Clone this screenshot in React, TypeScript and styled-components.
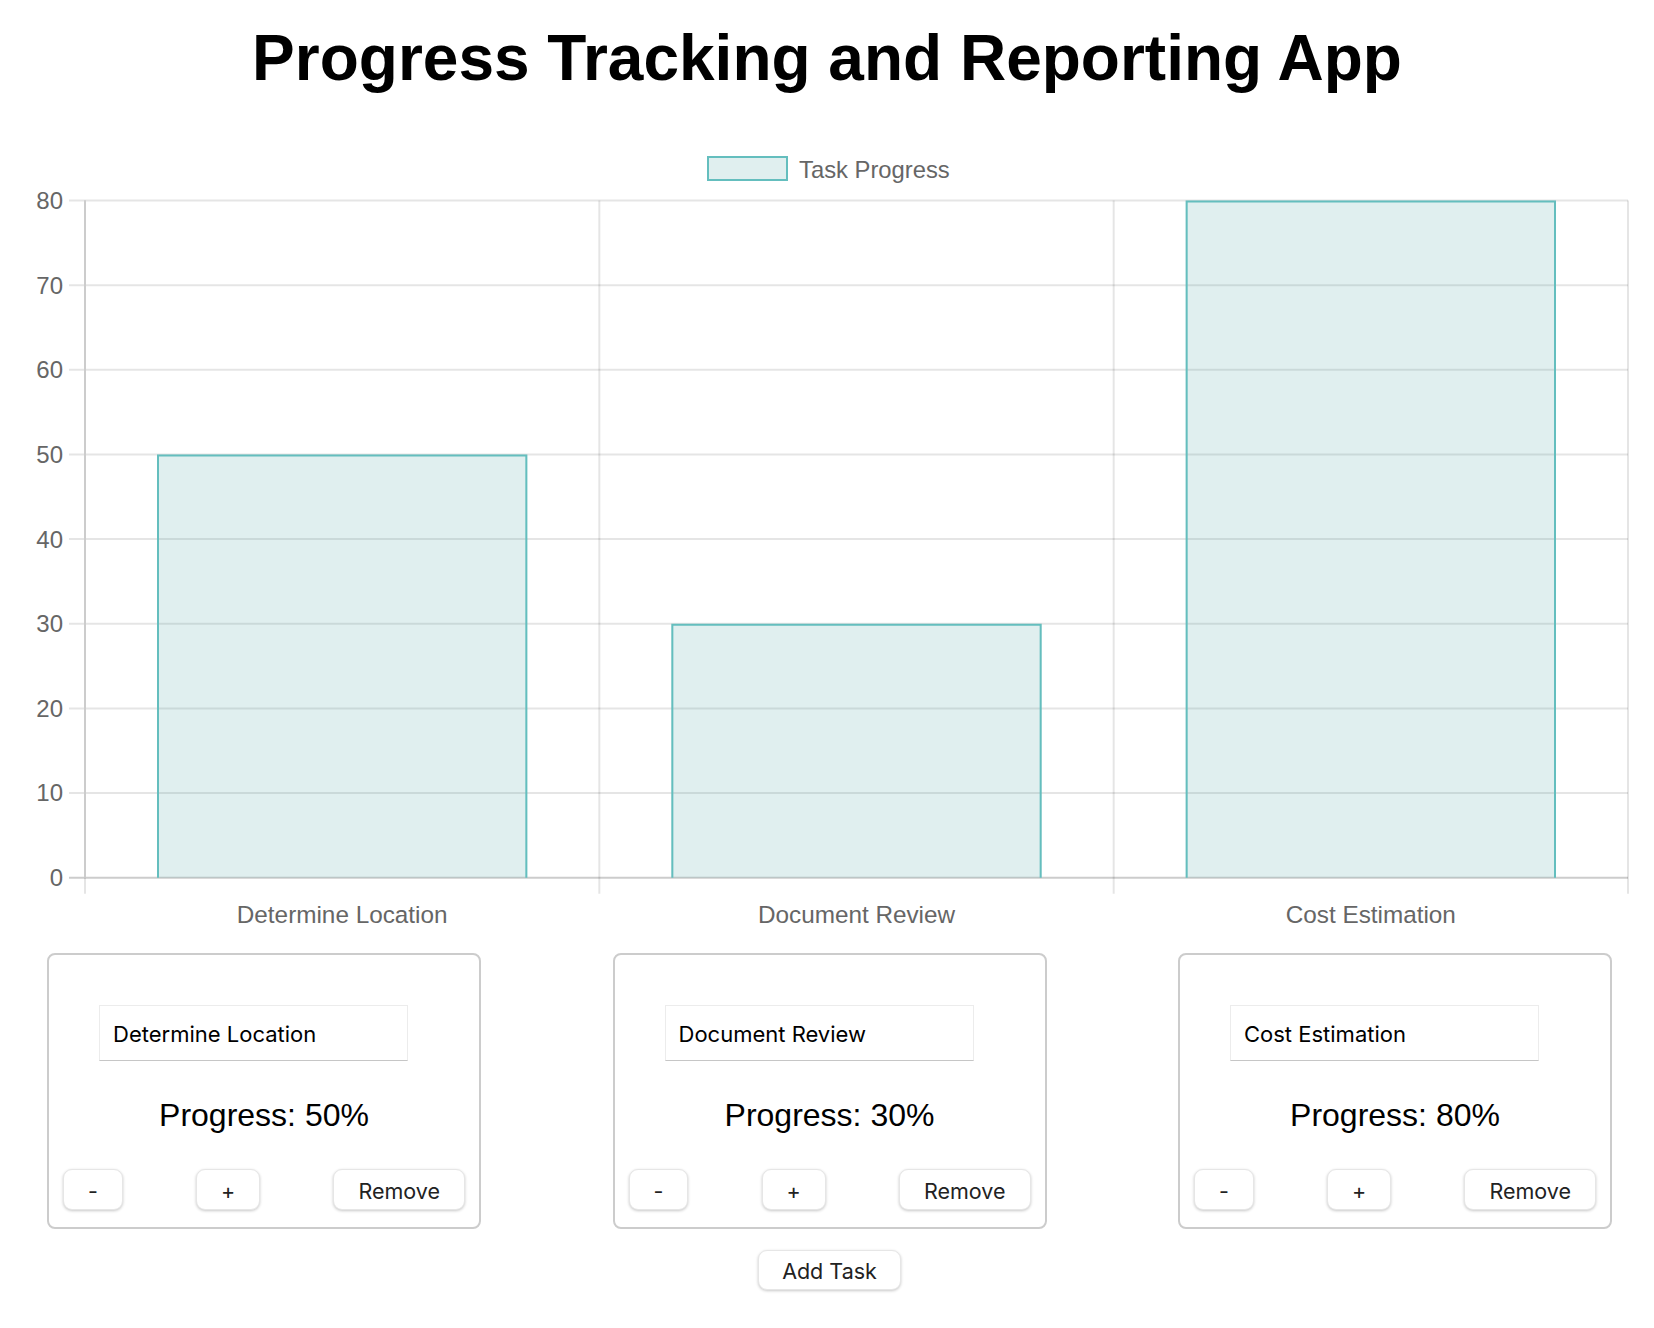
import React, { useState } from "react";
import styled, { createGlobalStyle } from "styled-components";

const GlobalStyle = createGlobalStyle`
  html, body {
    margin: 0;
    padding: 0;
    background: #ffffff;
    font-family: "Liberation Sans", Arial, Helvetica, sans-serif;
  }
`;

const Page = styled.div`
  width: 1654px;
  display: flex;
  flex-direction: column;
  align-items: stretch;
`;

const Title = styled.h1`
  margin: 21px 0 0;
  font-family: "Liberation Sans", Arial, sans-serif;
  font-size: 64px;
  line-height: 74px;
  font-weight: 700;
  color: #000;
  text-align: center;
`;

const ChartSvg = styled.svg`
  display: block;
  width: 1654px;
  height: 845px;
  font-family: "Liberation Sans", Arial, Helvetica, sans-serif;
`;

const CardRow = styled.div`
  display: flex;
  justify-content: space-between;
  margin-top: 13px;
  padding: 0 42px 0 47px;
`;

const Card = styled.div`
  box-sizing: border-box;
  width: 434px;
  border: 2px solid #cccccc;
  border-radius: 8px;
  padding: 50px 14px 17px;
  display: flex;
  flex-direction: column;
`;

const TaskInput = styled.input`
  box-sizing: border-box;
  width: 309px;
  height: 56px;
  margin-left: 36px;
  padding: 2px 0 0 13px;
  border: 1px solid #ececec;
  border-bottom: 1px solid #c6c6c6;
  border-radius: 0;
  background: #fff;
  font-family: Inter, "Open Sans", sans-serif;
  font-size: 22px;
  color: #000;
  outline: none;
`;

const ProgressText = styled.p`
  margin: 36px 0 35px;
  font-family: "Liberation Sans", Arial, sans-serif;
  font-size: 32px;
  line-height: 37px;
  text-align: center;
  color: #000;
`;

const ButtonRow = styled.div`
  display: flex;
  justify-content: space-between;
  align-items: center;
`;

const Button = styled.button<{ $wide?: boolean }>`
  box-sizing: border-box;
  height: ${(p) => (p.$wide ? 40 : 41)}px;
  padding: 2px ${(p) => (p.$wide ? 23 : 24)}px 0;
  background: #ffffff;
  border: 1px solid #e6e6e6;
  border-radius: 9px;
  box-shadow: 0 1px 3px rgba(0, 0, 0, 0.22);
  font-family: Inter, "Open Sans", sans-serif;
  font-size: 21.5px;
  color: #222;
  cursor: pointer;
`;

const Footer = styled.div`
  display: flex;
  justify-content: center;
  margin: 21px 0 38px;
  padding-left: 5px;
`;

type Task = { name: string; progress: number };

const X0 = 85;
const X1 = 1628;
const Y0 = 877.7;
const PER = 8.465;
const TOP = Y0 - 80 * PER;
const TEAL = "rgb(100,190,190)";
const FILL = "rgba(70,160,160,0.17)";
const GRID = "rgba(0,0,0,0.1)";
const AXIS = "#cccccc";
const LABEL = "#666666";

function Chart({ tasks }: { tasks: Task[] }) {
  const ticks = [0, 10, 20, 30, 40, 50, 60, 70, 80];
  const n = tasks.length;
  const cat = (X1 - X0) / n;
  return (
    <ChartSvg viewBox="0 95 1654 845">
      <rect x={708} y={157} width={79} height={23} fill={FILL} stroke={TEAL} strokeWidth={2} />
      <text x={799} y={177.5} fontSize={23.8} fill={LABEL}>
        Task Progress
      </text>
      {ticks.map((v) => {
        const y = Y0 - v * PER;
        return (
          <g key={v}>
            <line x1={69} x2={X1} y1={y} y2={y} stroke={v === 0 ? AXIS : GRID} strokeWidth={2} />
            <text x={63} y={y + 8.4} fontSize={24} fill={LABEL} textAnchor="end">
              {v}
            </text>
          </g>
        );
      })}
      {Array.from({ length: n + 1 }).map((_, i) => {
        const x = X0 + i * cat;
        return (
          <line key={i} x1={x} x2={x} y1={TOP} y2={Y0 + 16} stroke={GRID} strokeWidth={2} />
        );
      })}
      <line x1={X0} x2={X0} y1={TOP} y2={Y0} stroke={AXIS} strokeWidth={2} />
      {tasks.map((t, i) => {
        const cx = X0 + (i + 0.5) * cat;
        const bw = cat * 0.72;
        const x = cx - bw / 2;
        const top = Y0 - t.progress * PER;
        return (
          <g key={t.name + i}>
            <rect x={x} y={top} width={bw} height={Y0 - top} fill={FILL} />
            <path
              d={`M ${x + 1} ${Y0} V ${top + 1} H ${x + bw - 1} V ${Y0}`}
              fill="none"
              stroke={TEAL}
              strokeWidth={2}
            />
            <text x={cx} y={922.5} fontSize={24.3} fill={LABEL} textAnchor="middle">
              {t.name}
            </text>
          </g>
        );
      })}
    </ChartSvg>
  );
}

export default function App() {
  const [tasks, setTasks] = useState<Task[]>([
    { name: "Determine Location", progress: 50 },
    { name: "Document Review", progress: 30 },
    { name: "Cost Estimation", progress: 80 },
  ]);

  const update = (i: number, patch: Partial<Task>) =>
    setTasks((ts) => ts.map((t, j) => (j === i ? { ...t, ...patch } : t)));

  return (
    <Page>
      <GlobalStyle />
      <Title>Progress Tracking and Reporting App</Title>
      <Chart tasks={tasks} />
      <CardRow>
        {tasks.map((t, i) => (
          <Card key={i}>
            <TaskInput value={t.name} onChange={(e) => update(i, { name: e.target.value })} />
            <ProgressText>Progress: {t.progress}%</ProgressText>
            <ButtonRow>
              <Button onClick={() => update(i, { progress: Math.max(0, t.progress - 10) })}>-</Button>
              <Button onClick={() => update(i, { progress: Math.min(100, t.progress + 10) })}>+</Button>
              <Button onClick={() => setTasks((ts) => ts.filter((_, j) => j !== i))}>Remove</Button>
            </ButtonRow>
          </Card>
        ))}
      </CardRow>
      <Footer>
        <Button $wide onClick={() => setTasks((ts) => [...ts, { name: "New Task", progress: 0 }])}>
          Add Task
        </Button>
      </Footer>
    </Page>
  );
}
